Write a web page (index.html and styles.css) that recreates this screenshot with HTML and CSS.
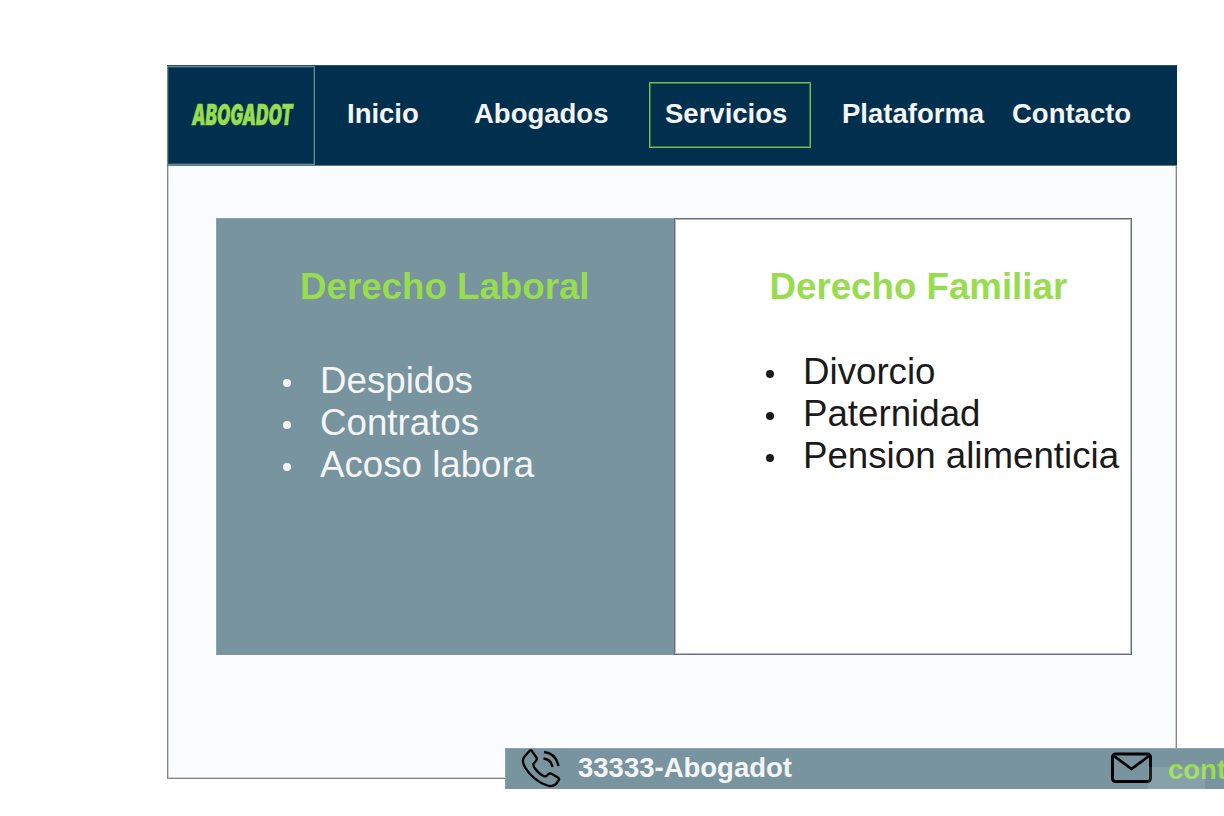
FILE: index.html
```html
<!DOCTYPE html>
<html lang="es">
<head>
<meta charset="utf-8">
<title>Abogadot</title>
<link rel="stylesheet" href="styles.css">
</head>
<body>
<main class="page">
  <header class="nav">
    <div class="brand">
      <span class="brand-text">ABOGADOT</span>
    </div>
    <nav class="links">
      <a class="link link-inicio">Inicio</a>
      <a class="link link-abogados">Abogados</a>
      <a class="link link-active">Servicios</a>
      <a class="link link-plataforma">Plataforma</a>
      <a class="link link-contacto">Contacto</a>
    </nav>
  </header>
  <section class="cards">
    <article class="card card-labor">
      <h2 class="title">Derecho Laboral</h2>
      <ul class="list">
        <li class="item">Despidos</li>
        <li class="item">Contratos</li>
        <li class="item">Acoso labora</li>
      </ul>
    </article>
    <article class="card card-family">
      <h2 class="title">Derecho Familiar</h2>
      <ul class="list">
        <li class="item">Divorcio</li>
        <li class="item">Paternidad</li>
        <li class="item">Pension alimenticia</li>
      </ul>
    </article>
  </section>
</main>
<footer class="contact">
  <svg class="phone" width="40" height="40" viewBox="0 0 40 40" fill="none" stroke="#000" stroke-width="2.3" stroke-linejoin="round">
    <path d="M10.500 1.500 L15.500 8.500 Q16.500 10.500 14.500 12.500 L12.500 14.500 Q12 17 14 19.500 Q18 25 22.500 27 Q24.500 28 26 26.500 L27.500 25 Q29 24 31 25 L37 28.500 Q38.500 29.500 38 31 L34.500 35.500 Q32 37.500 28 37 Q18 34.500 9 25 Q2 17 2 12 Q1.500 10 4 7 L8 2.500 Q9.500 .5 10.500 1.500 Z"/>
    <path d="M23 3 Q34.500 4 37.500 17 M22.500 9.500 Q30 10.500 31.500 18"/>
  </svg>
  <span class="phone-text">33333-Abogadot</span>
  <svg class="mail" width="42" height="32" viewBox="0 0 42 32" fill="none" stroke="#000" stroke-width="3" stroke-linejoin="round">
    <rect x="1.500" y="2" width="38" height="27.500" rx="3"/>
    <path d="M3 4 L20.500 17 L38 4" stroke-width="2.800"/>
  </svg>
  <span class="mail-text">cont</span>
  <span class="shade"></span>
</footer>
</body>
</html>
```
FILE: styles.css
```css
* { box-sizing: border-box; }
body {
  margin: 0;
  height: 816px;
  padding: 65px 0 0 167px;
  overflow: hidden;
  background: #fff;
  font-family: "Liberation Sans", Arial, sans-serif;
}
.page {
  width: 1010px;
  height: 714px;
  background: #fafcfe;
  border: solid #858585;
  border-width: 0 1px 1px 1px;
  box-shadow: inset 1px -1px #d0d1d3, inset -1px 0 #d0d1d3;
}
.nav {
  display: flex;
  width: 1010px;
  height: 101px;
  margin-left: -1px;
  background: #01304e;
  border-top: 1px solid #284f69;
  border-bottom: 1px solid #597c8d;
}
.brand {
  width: 148px;
  height: 99px;
  padding: 31px 0 0 24px;
  border: 1px solid #64899a;
  box-shadow: inset 0 0 0 1px #244e68;
}
.brand-text {
  display: block;
  width: 100px;
  font: italic 900 28px/34px Inter, sans-serif;
  color: #98dc4f;
  -webkit-text-stroke: 0.6px #98dc4f;
  transform: scaleX(0.61);
  transform-origin: 0 50%;
}
.links { display: flex; align-items: flex-start; }
.link {
  margin-top: 32px;
  font-size: 27.5px;
  line-height: 32px;
  font-weight: 700;
  color: #f5f5f7;
  white-space: nowrap;
}
.link-inicio { width: 129px; padding-left: 32px; }
.link-abogados { width: 205px; padding-left: 30px; }
.link-active {
  width: 162px;
  height: 66px;
  margin-top: 16px;
  padding: 15px 0 0 15px;
  border: 1px solid #76bd51;
  box-shadow: inset 0 0 0 1px #3a7648;
}
.link-plataforma { width: 201px; padding-left: 31px; }
.cards {
  display: flex;
  width: 916px;
  height: 437px;
  margin: 52px 0 0 48px;
}
.card { height: 437px; padding-top: 47px; }
.card-labor {
  width: 458px;
  background: #77949f;
  color: #f5f5f7;
  border: solid #8aa4af;
  border-width: 1px 0 0 1px;
}
.card-family {
  width: 458px;
  background: #fff;
  color: #1a1a1a;
  border: 1px solid #676b7d;
  box-shadow: inset 0 0 0 1px #b9bbc4;
}
.title {
  margin: 0;
  font-size: 36.7px;
  line-height: 42px;
  color: #98dc4f;
}
.card-labor .title { padding-left: 83px; }
.card-family .title { padding-left: 94.5px; }
.list { margin: 0; padding: 0; list-style: none; }
.card-labor .list { padding: 52px 0 0 66px; }
.card-family .list { padding: 43px 0 0 91px; }
.item {
  display: flex;
  align-items: center;
  gap: 29px;
  font-size: 36.7px;
  line-height: 42px;
  white-space: nowrap;
}
.item::before {
  content: "";
  width: 8px;
  height: 8px;
  margin-top: 4px;
  border-radius: 50%;
  background: currentColor;
}
.contact {
  position: relative;
  display: flex;
  width: 719px;
  height: 41px;
  margin: -31px 0 0 338px;
  background: #77949f;
  border: solid #8aa4af;
  border-width: 1px 0 0 1px;
  overflow: hidden;
}
.phone { flex: none; margin-left: 15px; }
.phone-text, .mail-text {
  flex: none;
  font-size: 27.5px;
  line-height: 32px;
  font-weight: 700;
  color: #f5f5f7;
}
.phone-text { width: 533px; margin: 3px 0 0 17px; }
.mail { flex: none; margin: 3px 0 0 0; }
.mail-text { margin: 5px 0 0 15px; color: #98dc4f; }
.shade {
  position: absolute;
  left: 642px;
  top: 18px;
  width: 57px;
  height: 22px;
  background: rgba(255, 255, 255, 0.12);
}
```
